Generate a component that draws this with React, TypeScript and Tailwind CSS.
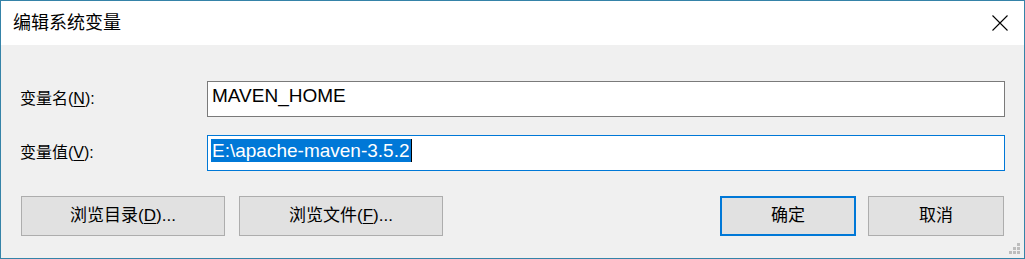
import React from "react";

const font = {
  fontFamily: '"Liberation Sans", "Noto Sans CJK SC", sans-serif',
};

function Label({ text, mnemonic }: { text: string; mnemonic: string }) {
  return (
    <div className="w-[187px] shrink-0 text-[16px] text-black leading-none">
      {text}(<u className="underline underline-offset-[2px]">{mnemonic}</u>):
    </div>
  );
}

function Button({
  children,
  className,
  primary,
}: {
  children: React.ReactNode;
  className: string;
  primary?: boolean;
}) {
  return (
    <button
      className={
        "h-[40px] bg-[#e1e1e1] text-[17px] text-black flex items-center justify-center " +
        (primary ? "border-2 border-[#0078d7] " : "border border-[#adadad] ") +
        className
      }
    >
      {children}
    </button>
  );
}

export default function App() {
  return (
    <div
      className="relative w-[1025px] h-[259px] border border-[#3583a8] bg-[#f0f0f0] flex flex-col"
      style={font}
    >
      {/* title bar */}
      <div className="h-[44px] bg-white flex items-center justify-between pl-[12px] pr-[16px]">
        <span className="text-[18px] text-black">编辑系统变量</span>
        <svg width="16" height="16" viewBox="0 0 16 16" className="text-black">
          <path d="M0.5 0.5 L15.5 15.5 M15.5 0.5 L0.5 15.5" stroke="currentColor" strokeWidth="1.1" />
        </svg>
      </div>

      <div className="flex-1 px-[19px] pt-[36px]">
        <div className="flex items-center">
          <Label text="变量名" mnemonic="N" />
          <div className="flex-1 h-[36px] bg-white border border-[#7a7a7a] flex items-center pl-[4px] pb-[5px] text-[19px] text-black">
            MAVEN_HOME
          </div>
        </div>

        <div className="flex items-center mt-[18px]">
          <Label text="变量值" mnemonic="V" />
          <div className="flex-1 h-[36px] bg-white border border-[#0078d7] flex items-center pl-[3px] pb-[5px] text-[19px]">
            <span className="bg-[#0078d7] text-white leading-[23px] pl-[1px] pr-[1px]">E:\apache-maven-3.5.2</span>
            <span className="w-[1px] h-[23px] bg-black" />
          </div>
        </div>

        <div className="flex justify-between mt-[25px] pl-[1px] pr-[1px]">
          <div className="flex gap-[14px]">
            <Button className="w-[204px]">
              浏览目录(<u className="underline underline-offset-[2px]">D</u>)...
            </Button>
            <Button className="w-[204px]">
              浏览文件(<u className="underline underline-offset-[2px]">F</u>)...
            </Button>
          </div>
          <div className="flex gap-[12px]">
            <Button className="w-[136px]" primary>
              确定
            </Button>
            <Button className="w-[136px]">取消</Button>
          </div>
        </div>
      </div>

      {/* size grip */}
      <svg width="12" height="12" viewBox="0 0 12 12" className="absolute right-[3px] bottom-[3px]">
        <g fill="#bdbdbd">
          <rect x="8" y="0" width="3" height="3" />
          <rect x="4" y="4" width="3" height="3" />
          <rect x="8" y="4" width="3" height="3" />
          <rect x="0" y="8" width="3" height="3" />
          <rect x="4" y="8" width="3" height="3" />
          <rect x="8" y="8" width="3" height="3" />
        </g>
      </svg>
    </div>
  );
}
